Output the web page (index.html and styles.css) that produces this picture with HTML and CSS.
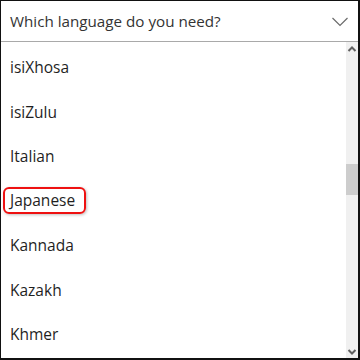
FILE: index.html
```html
<!DOCTYPE html>
<html lang="en">
<head>
    <meta charset="UTF-8">
    <meta name="viewport" content="width=device-width, initial-scale=1.0">
    <title>Language</title>
    <link rel="stylesheet" href="styles.css">
</head>
<body>
    <div class="picker">
        <div class="picker-head">
            <span class="picker-title">Which language do you need?</span>
            <svg class="chevron" width="16" height="10" viewBox="0 0 16 10">
                <polyline points="0.5,1 8,8.5 15.5,1" fill="none" stroke="#6b6b6b" stroke-width="1.2"/>
            </svg>
        </div>
        <div class="picker-body">
            <ul class="options">
                <li>isiXhosa</li>
                <li>isiZulu</li>
                <li>Italian</li>
                <li><span class="marked">Japanese</span></li>
                <li>Kannada</li>
                <li>Kazakh</li>
                <li>Khmer</li>
            </ul>
            <div class="scrollbar">
                <svg class="arrow" width="12" height="10" viewBox="0 0 12 10">
                    <polyline points="2.5,7 6,3.5 9.5,7" fill="none" stroke="#606060" stroke-width="2"/>
                </svg>
                <div class="track">
                    <div class="thumb"></div>
                </div>
                <svg class="arrow" width="12" height="10" viewBox="0 0 12 10">
                    <polyline points="2.5,3 6,6.5 9.5,3" fill="none" stroke="#606060" stroke-width="2"/>
                </svg>
            </div>
        </div>
    </div>
</body>
</html>
```
FILE: styles.css
```css
* {
    margin: 0;
    padding: 0;
    box-sizing: border-box;
}

body {
    font-family: "Open Sans", "Noto Sans", Arial, sans-serif;
    background: #ffffff;
}

.picker {
    width: 360px;
    height: 360px;
    border: 1px solid #111;
    border-right-width: 2px;
    border-bottom-width: 2px;
    display: flex;
    flex-direction: column;
}

.picker-head {
    height: 41px;
    border-bottom: 1px solid #a9a9a9;
    display: flex;
    align-items: center;
    justify-content: space-between;
    padding: 0 10px 0 9px;
}

.picker-title {
    font-size: 15.2px;
    color: #333;
}

.chevron {
    display: block;
    margin-top: 1px;
}

.picker-body {
    flex: 1;
    display: flex;
    overflow: hidden;
}

.options {
    flex: 1;
    list-style: none;
    padding-top: 3px;
}

.options li {
    height: 44.5px;
    display: flex;
    align-items: center;
    padding-left: 9px;
    font-size: 15.5px;
    color: #1f1f1f;
}

.marked {
    display: inline-block;
    height: 27px;
    line-height: 23px;
    margin-left: -7px;
    padding: 0 9px 0 5px;
    border: 2px solid #ee1111;
    border-radius: 6px;
    box-shadow: 1px 1px 3px rgba(0, 0, 0, 0.25);
}

.scrollbar {
    width: 12px;
    background: #f0f0f0;
    display: flex;
    flex-direction: column;
}

.arrow {
    display: block;
    height: 12px;
    margin-top: 1px;
}

.track {
    flex: 1;
    padding-top: 109px;
}

.thumb {
    height: 31px;
    background: #cdcdcd;
}
```
